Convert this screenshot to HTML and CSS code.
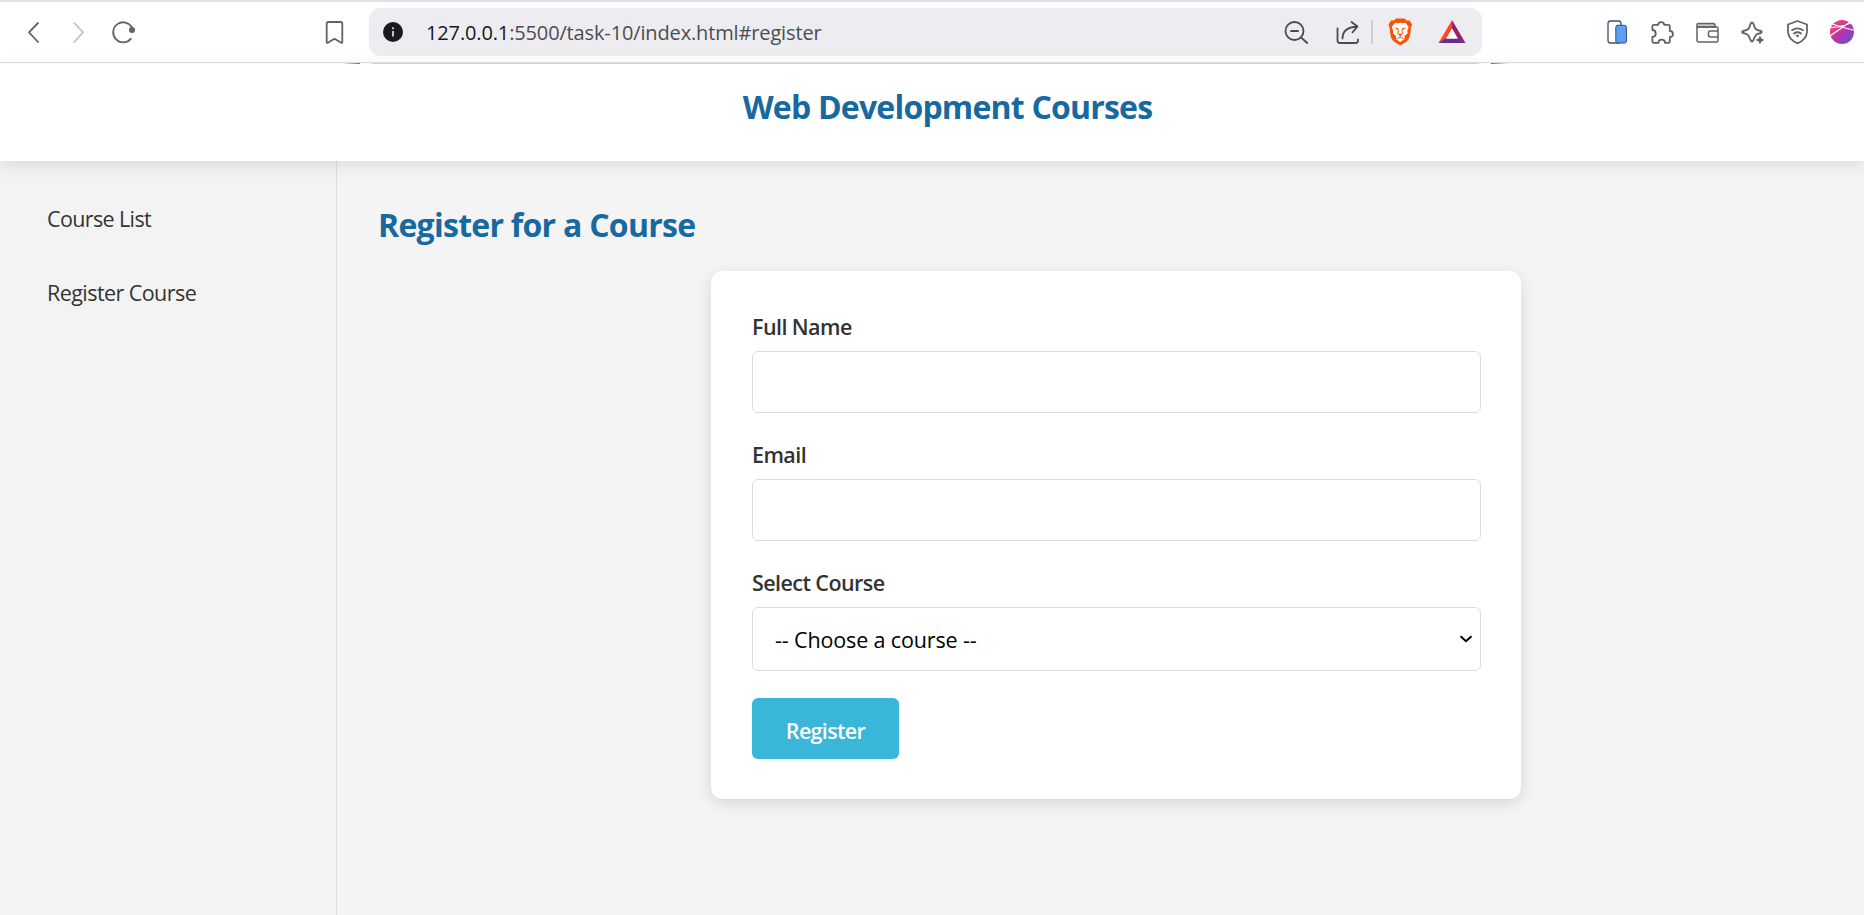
FILE: index.html
```
<!DOCTYPE html>
<html lang="en">
<head>
<meta charset="utf-8">
<title>Web Development Courses</title>
<link rel="stylesheet" href="styles.css">
</head>
<body>
<div class="toolbar">
  <div class="nav">
    <svg class="icon" viewBox="0 0 28 28"><path d="M18 5 9 14.300 18 24"/></svg>
    <svg class="icon muted" viewBox="0 0 28 28"><path d="M9.300 5 18 14.300 9.300 24"/></svg>
    <svg class="icon" viewBox="0 0 28 28"><path d="M20.800 20.800A10 10 0 1 1 22 9.500"/><circle class="solid" cx="22" cy="12" r="3"/></svg>
  </div>
  <svg class="icon bookmark" viewBox="0 0 28 28"><path d="M8.500 4H20.500Q22.300 4 22.300 5.800V24Q22.300 25.600 20.800 24.500L14.500 20.800 8.200 24.500Q6.700 25.600 6.700 24V5.800Q6.700 4 8.500 4Z"/></svg>
  <div class="address">
    <svg class="icon" viewBox="0 0 28 28"><circle class="info" cx="14" cy="14" r="10"/><path class="info-mark" d="M14 13V18.500M14 9.200V11.200"/></svg>
    <div class="url"><span class="host">127.0.0.1</span>:5500/task-10/index.html#register</div>
    <svg class="icon dark zoom" viewBox="0 0 28 28"><circle cx="12.500" cy="13" r="9"/><path d="M9 13H16M19 19.500 25.300 25"/></svg>
    <svg class="icon dark share" viewBox="0 0 28 28"><path d="M4.500 10.500V22.500Q4.500 25 7 25H22.500Q25 25 25 22.500V21.500M9.500 20.500Q9.500 9.500 24 8.500M18.500 4 24.500 8.500 19.500 14.300"/></svg>
    <span class="divider"></span>
    <svg class="icon lion" viewBox="0 0 28 28"><path fill="#fb5207" d="M8 2.500 10 .5H18.500L20.500 2.500 23.500 2.500 26 6.500 25 9.500 24.300 16Q23.500 21.500 20 24L14.200 27.500 8.500 24Q5 21.500 4.300 16L3.500 9.500 2.500 6.500 5 2.500Z"/><path fill="#fff" d="M9 4.700 12 5.300 14.200 4.800 16.500 5.300 19.500 4.700 22.700 9 21.300 12.500 21.500 15.500 18.500 18 18.500 21 14.200 24 10 21 10 18 7 15.500 7.200 12.500 5.800 9Z"/><path fill="#fb5207" d="M8.300 9.300 12.300 10.300 12.500 12.800ZM20.200 9.300 16.200 10.300 16 12.800ZM11.500 15.800H17L14.200 18.200Z"/><path fill="none" stroke="#fb5207" stroke-width=".9" d="M12.500 12.500 11.800 15.800M16 12.500 16.800 15.800M11.300 20.500 14.200 19.200 17.200 20.500M14.200 17V19.200"/></svg>
    <svg class="icon bat" viewBox="0 0 28 28"><path fill="#ff4724" d="M14 2V10.500L7.500 21.500.500 25Z"/><path fill="#9e1f63" d="M14 2V10.500L20.500 21.500 27.500 25Z"/><path fill="#662d91" d="M.500 25 7.500 20.500H20.500L27.500 25Z"/><path fill="#fff" d="M14 10.500 19.300 20.500H8.700Z"/></svg>
  </div>
  <div class="extensions">
    <svg class="icon" viewBox="0 0 28 28"><rect x="5" y="3" width="13" height="22" rx="2.500" fill="#fff" stroke="#3f5068" stroke-width="1.300"/><rect x="12.800" y="7.300" width="10.700" height="17.700" rx="2" fill="#5b9ff5" stroke="#3b5170" stroke-width="1"/></svg>
    <svg class="icon" viewBox="0 0 28 28"><path d="M5.500 6.800H10.200C10.200 3.200 16.200 3.200 16.200 6.800H20.200Q21.800 6.800 21.800 8.400V13C26 13 26 19.200 21.800 19.200V23.200Q21.800 24.800 20.200 24.800H17C17 20.500 10.500 20.500 10.500 24.800H6Q4.400 24.800 4.400 23.200V18.800C8.800 18.800 8.800 12 4.400 12V8.400Q4.400 6.800 5.500 6.800Z"/></svg>
    <svg class="icon" viewBox="0 0 28 28"><path fill="#c4c4ca" stroke-width="1.500" d="M4 6.500Q4 5.500 5 5.500H20Q22 5.500 22 7.500V9H4Z"/><path stroke-width="1.500" d="M4 9H23.500Q25 9 25 10.500V22.500Q25 24 23.500 24H5.500Q4 24 4 22.500ZM25 13H17.500Q15.500 13 15.500 15V17Q15.500 19 17.500 19H25"/></svg>
    <svg class="icon" viewBox="0 0 28 28"><path d="M23 13Q24.500 14 23 15C18 16 17.500 16.500 15.500 22Q14 25 12.500 22C10.500 16.500 10 16 5 15Q3 14 5 13C10.500 12 11 11 12.500 6Q14 3 15.500 6C17 11 17.500 12 23 13Z"/><path class="solid" d="M22 17.500 23.400 20.600 26.500 22 23.400 23.400 22 26.500 20.600 23.400 17.500 22 20.600 20.600Z"/></svg>
    <svg class="icon" viewBox="0 0 28 28"><path d="M14.500 3 24 6.500V14Q23.500 21.500 14.500 25.300 5.500 21.500 5 14V6.500ZM9 12.300Q14.500 8.500 20 12.300M11 15.500Q14.500 13 18 15.500"/><path class="solid" d="M12.500 17.500Q14.500 16 16.500 17.500L14.500 19.500Z"/></svg>
    <svg class="icon" viewBox="0 0 28 28"><defs><linearGradient id="ball" x1="0" y1="0" x2="1" y2="1"><stop offset="0" stop-color="#fb5057"/><stop offset=".5" stop-color="#c032a8"/><stop offset="1" stop-color="#4e56e0"/></linearGradient><clipPath id="round"><circle cx="14" cy="14" r="12"/></clipPath></defs><circle cx="14" cy="14" r="12" fill="url(#ball)" stroke="none"/><g clip-path="url(#round)" stroke="#fff" stroke-width="1.100"><path d="M2 18 22 4M4 6Q14 9.500 27 12.500M2 9.500Q12 9.500 23 5"/></g></svg>
  </div>
</div>
<div class="edge"><span class="edge-tip left"></span><span class="edge-line"></span><span class="edge-tip right"></span></div>
<header class="header"><h1 class="title">Web Development Courses</h1></header>
<div class="layout">
  <nav class="sidebar">
    <a class="link">Course List</a>
    <a class="link second">Register Course</a>
  </nav>
  <main class="main">
    <h2 class="heading">Register for a Course</h2>
    <form class="card">
      <label class="label" for="name">Full Name</label>
      <input class="field" id="name" type="text">
      <label class="label" for="email">Email</label>
      <input class="field" id="email" type="email">
      <label class="label">Select Course</label>
      <div class="select"><span>-- Choose a course --</span><svg class="chevron" viewBox="0 0 14 10"><path d="M1.500 2.200 7 7.200 12.500 2.200"/></svg></div>
      <button class="submit" type="button">Register</button>
    </form>
  </main>
</div>
</body>
</html>
```
FILE: styles.css
```
* { box-sizing: border-box; }
body {
  margin: 0;
  height: 915px;
  overflow: hidden;
  display: flex;
  flex-direction: column;
  background: #f4f4f4;
  color: #333;
  font-family: "Open Sans", "Noto Sans", sans-serif;
  font-size: 21.5px;
}

/* Browser toolbar */
.toolbar {
  flex: none;
  height: 63px;
  padding: 6px 8px 6px 20px;
  display: flex;
  align-items: flex-start;
  background: #fff;
  border-top: 2px solid #e2e1e8;
  border-bottom: 1px solid #e1e2e5;
}
.icon {
  display: block;
  flex: none;
  width: 28px;
  height: 28px;
  fill: none;
  stroke: #5f6368;
  stroke-width: 1.8;
  stroke-linecap: round;
  stroke-linejoin: round;
}
.toolbar > .icon, .nav, .extensions { margin-top: 10px; }
.nav { display: flex; gap: 17px; }
.muted { stroke: #c2c3c5; }
.dark { stroke: #4a4a50; }
.solid { fill: #5f6368; stroke: none; }
.bookmark { margin-left: 182px; }
.address {
  width: 1113px;
  height: 48px;
  margin-left: 21px;
  padding: 0 16px 0 10px;
  display: flex;
  align-items: center;
  background: #ededf1;
  border-radius: 12px;
}
.info { fill: #1b1b1f; stroke: none; }
.info-mark { stroke: #d5d5da; stroke-width: 1.8; stroke-linecap: butt; }
.url {
  flex: 1;
  margin-left: 19px;
  padding-top: 2px;
  font-size: 20px;
  line-height: 46px;
  letter-spacing: -0.14px;
  color: #4c4c50;
}
.host { color: #17171a; }
.share { margin-left: 23px; }
.divider { width: 2px; height: 24px; margin-left: 10px; background: #cfcfd4; }
.lion { margin-left: 13px; stroke: none; }
.bat { margin-left: 24px; stroke: none; }
.extensions { display: flex; gap: 17px; margin-left: auto; }

/* Thin strip where the toolbar overlaps the page */
.edge { flex: none; height: 1px; padding-left: 343px; display: flex; background: #fff; }
.edge-tip { width: 17px; }
.edge-tip.left { background: linear-gradient(90deg, #fff, #6d6e76); }
.edge-tip.right { background: linear-gradient(90deg, #6d6e76, #fff); }
.edge-line { width: 1107px; margin: 0 12px; background: #d8d8da; }

/* Page */
.header {
  flex: none;
  position: relative;
  height: 97px;
  padding: 21px 0 0 31px;
  background: #fff;
  box-shadow: 0 4px 16px rgba(0, 0, 0, 0.1);
}
.title, .heading { margin: 0; color: #17699f; font-size: 32px; font-weight: 700; }
.title { line-height: 44px; text-align: center; letter-spacing: -0.8px; }
.layout { flex: 1; display: flex; }
.sidebar {
  width: 337px;
  padding: 43px 0 0 47px;
  display: flex;
  flex-direction: column;
  gap: 44px;
  background: #f3f3f3;
  border-right: 1px solid #dcdcdc;
}
.link { line-height: 30px; letter-spacing: -0.62px; }
.second { letter-spacing: -0.56px; }
.main { flex: 1; padding: 44px 41px 0 41px; }
.heading { line-height: 40px; letter-spacing: -0.73px; }
.card {
  width: 810px;
  height: 528px;
  margin: 26px 0 0 333px;
  padding: 41px 40px 40px 41px;
  display: flex;
  flex-direction: column;
  background: #fff;
  border-radius: 12px;
  box-shadow: 0 4px 16px rgba(0, 0, 0, 0.12);
}
.label { line-height: 30px; margin-bottom: 9px; font-weight: 600; letter-spacing: -0.57px; }
.field, .select {
  flex: none;
  width: 729px;
  height: 62px;
  margin-bottom: 27px;
  background: #fff;
  border: 1px solid #dcdcdc;
  border-radius: 6px;
}
.select {
  height: 64px;
  padding: 0 7px 0 22px;
  display: flex;
  align-items: center;
  justify-content: space-between;
  color: #000;
  letter-spacing: -0.14px;
}
.chevron { width: 14px; height: 10px; fill: none; stroke: #000; stroke-width: 2; }
.submit {
  width: 147px;
  height: 61px;
  padding: 4px 0 0;
  background: #39b6d8;
  border: 0;
  border-radius: 6px;
  color: #fff;
  font: 600 21.5px "Open Sans", "Noto Sans", sans-serif;
  letter-spacing: -0.67px;
}
```
